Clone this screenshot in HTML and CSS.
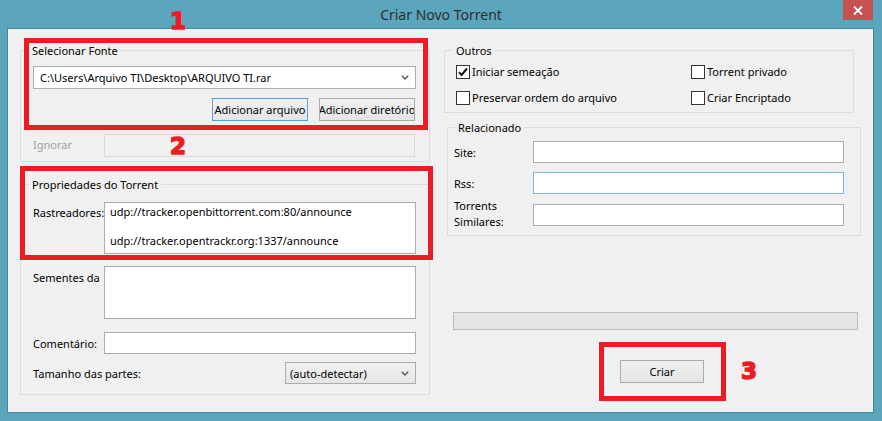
FILE: index.html
```html
<!DOCTYPE html>
<html lang="pt">
<head>
<meta charset="utf-8">
<title>Criar Novo Torrent</title>
<link rel="stylesheet" href="styles.css">
</head>
<body>
<div class="window">
  <div class="titlebar">
    <span class="title">Criar Novo Torrent</span>
    <div class="close-wrap">
      <div class="close">
        <svg width="10" height="9" viewBox="0 0 10 9"><path d="M1 0.5 L9 8.5 M9 0.5 L1 8.5" stroke="#fff" stroke-width="1.8" fill="none"/></svg>
      </div>
    </div>
  </div>

  <div class="client">
    <div class="col-left">
      <fieldset class="group g-source">
        <legend>Selecionar Fonte</legend>
        <div class="src-body">
          <div class="combo">
            <span>C:\Users\Arquivo TI\Desktop\ARQUIVO TI.rar</span>
            <svg class="chev" width="8" height="5" viewBox="0 0 8 5"><path d="M0.8 0.8 L4 4 L7.2 0.8" stroke="#5a5a5a" stroke-width="1.4" fill="none"/></svg>
          </div>
          <div class="btn-row">
            <button class="btn btn-focus"><span>Adicionar arquivo</span></button>
            <button class="btn"><span>Adicionar diretório</span></button>
          </div>
          <div class="row row-ignore">
            <span class="lbl lbl-disabled">Ignorar</span>
            <div class="input input-disabled"></div>
          </div>
        </div>
      </fieldset>

      <fieldset class="group g-props">
        <legend>Propriedades do Torrent</legend>
        <div class="props-body">
          <div class="row row-top">
            <span class="lbl lbl-top">Rastreadores:</span>
            <div class="textbox tracker-box">udp://tracker.openbittorrent.com:80/announce

udp://tracker.opentrackr.org:1337/announce</div>
          </div>
          <div class="row row-top row-seeds">
            <span class="lbl lbl-top2">Sementes da</span>
            <div class="textbox seeds-box"></div>
          </div>
          <div class="row row-comment">
            <span class="lbl">Comentário:</span>
            <div class="input input-wide"></div>
          </div>
          <div class="row row-size">
            <span class="lbl-grow">Tamanho das partes:</span>
            <div class="dropdown">
              <span>(auto-detectar)</span>
              <svg class="chev" width="8" height="5" viewBox="0 0 8 5"><path d="M0.8 0.8 L4 4 L7.2 0.8" stroke="#5a5a5a" stroke-width="1.4" fill="none"/></svg>
            </div>
          </div>
        </div>
      </fieldset>
    </div>

    <div class="col-right">
      <fieldset class="group g-others">
        <legend>Outros</legend>
        <div class="others-body">
          <label class="check"><span class="box"><svg width="12" height="12" viewBox="0 0 12 12"><path d="M2 6.2 L4.6 9 L10 2.5" stroke="#111" stroke-width="2" fill="none"/></svg></span>Iniciar semeação</label>
          <label class="check"><span class="box"></span>Torrent privado</label>
          <label class="check"><span class="box"></span>Preservar ordem do arquivo</label>
          <label class="check"><span class="box"></span>Criar Encriptado</label>
        </div>
      </fieldset>

      <fieldset class="group g-related">
        <legend>Relacionado</legend>
        <div class="related-body">
          <span class="rlbl">Site:</span>
          <div class="input"></div>
          <span class="rlbl">Rss:</span>
          <div class="input input-focus"></div>
          <span class="rlbl rlbl-two">Torrents<br>Similares:</span>
          <div class="input input-third"></div>
        </div>
      </fieldset>

      <div class="progress"></div>

      <div class="actions">
        <button class="btn btn-create"><span>Criar</span></button>
      </div>
    </div>
  </div>

  <div class="anno anno-1"></div>
  <div class="anno anno-2"></div>
  <div class="anno anno-3"></div>
  <span class="num num-1">1</span>
  <span class="num num-2">2</span>
  <span class="num num-3">3</span>
</div>
</body>
</html>
```

FILE: styles.css
```css
* { box-sizing: border-box; }

body {
  margin: 0;
  background: #5ba5bd;
  font-family: "Noto Sans", "Segoe UI", sans-serif;
  font-size: 11px;
  color: #000;
}

.window {
  position: relative;
  width: 882px;
  height: 421px;
  overflow: hidden;
}

/* title bar */
.titlebar {
  display: grid;
  grid-template-columns: 1fr auto 1fr;
  height: 28px;
}
.title {
  grid-column: 2;
  font-size: 14px;
  line-height: 30px;
  color: #2d2d2d;
}
.close-wrap {
  grid-column: 3;
  justify-self: end;
  margin-right: 9px;
}
.close {
  width: 30px;
  height: 20px;
  background: #c75050;
  display: flex;
  align-items: center;
  justify-content: center;
}

/* client */
.client {
  margin-left: 7px;
  width: 867px;
  height: 385px;
  border: 1px solid #3f8aa2;
  background: #f0f0f0;
  display: flex;
  gap: 14px;
  padding: 14px 12px 0 12px;
}
.col-left { width: 410px; flex: none; display: flex; flex-direction: column; }
.col-right { width: 417px; flex: none; display: flex; flex-direction: column; }

fieldset.group {
  margin: 0;
  padding: 0;
  border: 1px solid #dcdcdc;
  min-width: 0;
}
fieldset.group legend {
  margin-left: 8px;
  padding: 0 3px;
  line-height: 15px;
}

/* common controls */
.row { display: flex; align-items: center; }
.row-top { align-items: flex-start; }
.lbl { width: 71px; flex: none; white-space: nowrap; }
.lbl-disabled { color: #a0a0a0; margin-top: -3px; }
.lbl-top { margin-top: 3px; }
.lbl-top2 { margin-top: 4px; }
.lbl-grow { flex: 1; }

.input {
  height: 22px;
  border: 1px solid #abadb3;
  background: #fff;
}
.input-disabled {
  width: 311px;
  height: 23px;
  border-color: #d9d9d9;
  background: #f0f0f0;
}
.input-wide { width: 312px; }
.input-focus { border-color: #7eb4ea; }

.textbox {
  width: 312px;
  border: 1px solid #abadb3;
  background: #fff;
}

.combo {
  height: 23px;
  border: 1px solid #abadb3;
  background: #fff;
  display: flex;
  align-items: center;
  justify-content: space-between;
  padding: 0 6px 0 6px;
}
.chev { display: block; }

.btn {
  font: inherit;
  color: #000;
  height: 23px;
  width: 96px;
  padding: 0;
  border: 1px solid #acacac;
  background: linear-gradient(#f0f0f0, #e5e5e5);
  display: flex;
  align-items: center;
  justify-content: center;
  overflow: hidden;
  white-space: nowrap;
}
.btn span { flex: none; }
.btn-focus { border-color: #5d9edb; }

/* source group */
.src-body { padding: 8px 13px 4px 12px; }
.btn-row {
  display: flex;
  justify-content: flex-end;
  gap: 11px;
  margin-top: 9px;
  margin-right: 1px;
}
.row-ignore { margin-top: 13px; }

/* properties group */
fieldset.g-props { margin-top: 15px; }
.props-body { padding: 10px 13px 10px 12px; }
.tracker-box {
  height: 52px;
  padding: 2px 5px;
  line-height: 14.5px;
  white-space: pre;
}
.row-seeds { margin-top: 12px; }
.seeds-box { height: 53px; }
.row-comment { margin-top: 13px; }
.row-size { margin-top: 8px; }
.dropdown {
  width: 131px;
  height: 22px;
  border: 1px solid #acacac;
  background: linear-gradient(#f0f0f0, #e5e5e5);
  display: flex;
  align-items: center;
  justify-content: space-between;
  padding: 0 6px 0 4px;
}

/* others group */
fieldset.g-others { width: 410px; }
.others-body {
  display: grid;
  grid-template-columns: 235px auto;
  row-gap: 9px;
  padding: 5px 0 6px 11px;
}
.check {
  display: flex;
  align-items: center;
  gap: 2px;
  height: 17px;
  white-space: nowrap;
}
.box {
  width: 14px;
  height: 14px;
  border: 1px solid #333;
  background: #fff;
  display: flex;
  align-items: center;
  justify-content: center;
}

/* related group */
fieldset.g-related { width: 414px; margin-top: 7px; margin-left: 3px; }
fieldset.g-related legend { margin-left: 7px; }
.related-body {
  display: grid;
  grid-template-columns: 79px 1fr;
  row-gap: 9px;
  align-items: center;
  padding: 6px 16px 9px 6px;
}
.rlbl { white-space: nowrap; }
.rlbl-two { line-height: 16px; margin: -6px 0 -4px; }
.input-third { margin-top: 1px; }

.progress {
  margin: 76px 0 0 9px;
  width: 405px;
  height: 18px;
  border: 1px solid #bcbcbc;
  background: #e6e6e6;
}
.actions { margin-top: 30px; padding-left: 176px; }
.btn-create { width: 84px; }

/* annotations */
.anno {
  position: absolute;
  border: 5px solid #ed1c24;
}
.anno-1 { left: 24px; top: 38px; width: 404px; height: 92px; }
.anno-2 { left: 20px; top: 166px; width: 413px; height: 94px; }
.anno-3 { left: 599px; top: 342px; width: 127px; height: 59px; }

.num {
  position: absolute;
  color: #ed1c24;
  font-family: "DejaVu Sans", sans-serif;
  font-weight: bold;
  font-size: 23px;
  line-height: 23px;
  -webkit-text-stroke: 1.5px #ed1c24;
}
.num-1 { left: 170px; top: 10px; }
.num-2 { left: 170px; top: 135px; }
.num-3 { left: 741px; top: 360px; }
```
